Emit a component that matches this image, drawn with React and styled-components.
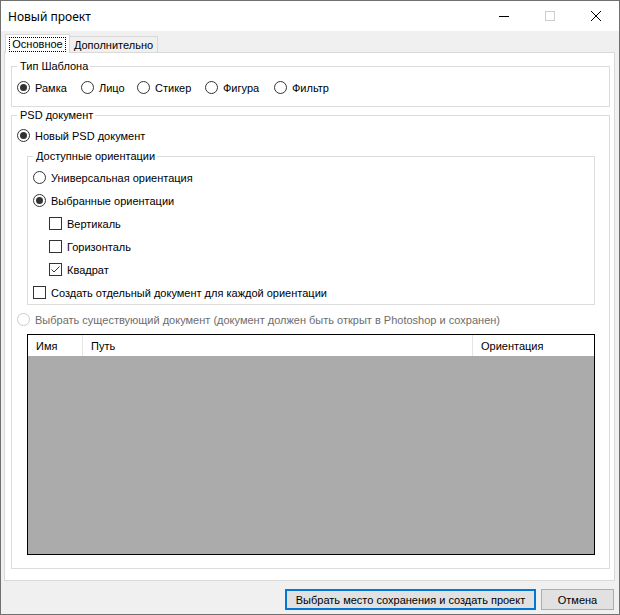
import React from "react";
import styled, { createGlobalStyle } from "styled-components";

const GlobalStyle = createGlobalStyle`
  html, body {
    margin: 0;
    padding: 0;
  }
  body {
    background: #f0f0f0;
    font-family: "Liberation Sans", Arial, sans-serif;
    font-size: 11px;
    color: #000;
  }
`;

const Window = styled.div`
  width: 620px;
  height: 615px;
  box-sizing: border-box;
  border: 1px solid #707070;
  background: #f0f0f0;
  display: flex;
  flex-direction: column;
`;

const TitleBar = styled.div`
  height: 30px;
  flex-shrink: 0;
  background: #fff;
  display: flex;
  align-items: center;
`;

const Title = styled.div`
  flex: 1;
  padding-left: 7px;
  font-family: "Noto Sans", "Open Sans", sans-serif;
  font-size: 12px;
`;

const CaptionButton = styled.div`
  width: 46px;
  height: 30px;
  display: flex;
  align-items: center;
  justify-content: center;
`;

const Body = styled.div`
  flex: 1;
  display: flex;
  flex-direction: column;
  padding: 3px 4px 4px 3px;
`;

const TabStrip = styled.div`
  height: 18px;
  display: flex;
  align-items: flex-end;
  padding-left: 1px;
`;

const Tab = styled.div`
  box-sizing: border-box;
  border: 1px solid #d9d9d9;
  border-bottom: none;
  position: relative;
  display: flex;
  align-items: center;
  justify-content: center;
  width: ${(p) => p.$w}px;
  height: ${(p) => (p.$active ? 19 : 16)}px;
  margin-bottom: ${(p) => (p.$active ? -1 : 0)}px;
  margin-left: ${(p) => (p.$active ? 0 : -1)}px;
  background: ${(p) => (p.$active ? "#fff" : "#f0f0f0")};
  z-index: ${(p) => (p.$active ? 2 : 1)};
`;

const FocusBox = styled.span`
  box-sizing: border-box;
  border: 1px dotted #000;
  height: 15px;
  line-height: 13px;
  padding: 0 2px;
  margin-top: 1px;
`;

const TabPage = styled.div`
  flex: 1;
  display: flex;
  flex-direction: column;
  background: #fff;
  border: 1px solid #d9d9d9;
  padding: 7px 4px 11px 6px;
`;

const Group = styled.fieldset`
  margin: ${(p) => p.$mt || 0}px ${(p) => p.$mx || 0}px 0;
  padding: ${(p) => p.$pt || 0}px 4px ${(p) => p.$pb || 0}px 5px;
  border: 1px solid #dcdcdc;
  min-width: 0;
  display: flex;
  flex-direction: column;
  flex: ${(p) => (p.$grow ? 1 : "none")};
`;

const Legend = styled.legend`
  padding: 0 2px 0 3px;
  line-height: 13px;
  font-size: 11px;
`;

const Row = styled.div`
  height: 23px;
  display: flex;
  align-items: center;
  gap: ${(p) => (p.$gap !== undefined ? p.$gap : 0)}px;
  padding-left: ${(p) => p.$indent || 0}px;
  margin-top: ${(p) => p.$mt || 0}px;
  flex-shrink: 0;
`;

const Option = styled.label`
  display: flex;
  align-items: center;
  gap: 5px;
  width: ${(p) => (p.$w ? `${p.$w}px` : "auto")};
  color: ${(p) => (p.$disabled ? "#6d6d6d" : "#000")};
  white-space: nowrap;
`;

const RadioCircle = styled.span`
  box-sizing: border-box;
  width: 13px;
  height: 13px;
  border-radius: 50%;
  border: 1px solid ${(p) => (p.$disabled ? "#cccccc" : "#333")};
  background: #fff;
  display: flex;
  align-items: center;
  justify-content: center;
  flex-shrink: 0;

  &::after {
    content: "";
    width: 7px;
    height: 7px;
    border-radius: 50%;
    background: #333;
    display: ${(p) => (p.$checked ? "block" : "none")};
  }
`;

const CheckSquare = styled.span`
  box-sizing: border-box;
  width: 13px;
  height: 13px;
  border: 1px solid #333;
  background: #fff;
  display: flex;
  align-items: center;
  justify-content: center;
  flex-shrink: 0;
`;

const ListView = styled.div`
  flex: 1;
  margin: 3px 10px 0;
  border: 1px solid #000;
  background: #ababab;
  display: flex;
  flex-direction: column;
`;

const Header = styled.div`
  height: 21px;
  background: #fff;
  display: grid;
  grid-template-columns: 55px 390px 1fr;
`;

const HeaderCell = styled.div`
  display: flex;
  align-items: center;
  padding-left: 8px;
  border-right: ${(p) => (p.$last ? "none" : "1px solid #e5e5e5")};
`;

const ButtonBar = styled.div`
  height: 21px;
  margin-top: 8px;
  display: flex;
  justify-content: flex-end;
  gap: 5px;
  padding-right: 1px;
`;

const Button = styled.button`
  box-sizing: border-box;
  height: 21px;
  width: ${(p) => p.$w}px;
  padding: 0;
  font-family: "Liberation Sans", Arial, sans-serif;
  font-size: 11px;
  color: #000;
  background: #e1e1e1;
  border: ${(p) => (p.$default ? "2px solid #0078d7" : "1px solid #adadad")};
  border-radius: 0;
`;

const Radio = ({ label, checked, disabled, w }) => (
  <Option $w={w} $disabled={disabled}>
    <RadioCircle $checked={checked} $disabled={disabled} />
    {label}
  </Option>
);

const Checkbox = ({ label, checked }) => (
  <Option>
    <CheckSquare>
      {checked && (
        <svg width="11" height="11" viewBox="0 0 11 11">
          <polyline points="1.5,5.5 4,8 9.5,2.5" fill="none" stroke="#333" strokeWidth="1" />
        </svg>
      )}
    </CheckSquare>
    {label}
  </Option>
);

export default function App() {
  return (
    <>
      <GlobalStyle />
      <Window>
        <TitleBar>
          <Title>Новый проект</Title>
          <CaptionButton>
            <svg width="10" height="10" viewBox="0 0 10 10">
              <line x1="0" y1="5.5" x2="10" y2="5.5" stroke="#000" strokeWidth="1" />
            </svg>
          </CaptionButton>
          <CaptionButton>
            <svg width="10" height="10" viewBox="0 0 10 10">
              <rect x="0.5" y="0.5" width="9" height="9" fill="none" stroke="#cccccc" strokeWidth="1" />
            </svg>
          </CaptionButton>
          <CaptionButton>
            <svg width="10" height="10" viewBox="0 0 10 10">
              <line x1="0" y1="0" x2="10" y2="10" stroke="#000" strokeWidth="1" />
              <line x1="10" y1="0" x2="0" y2="10" stroke="#000" strokeWidth="1" />
            </svg>
          </CaptionButton>
        </TitleBar>

        <Body>
          <TabStrip>
            <Tab $active $w={65}>
              <FocusBox>Основное</FocusBox>
            </Tab>
            <Tab $w={89}>Дополнительно</Tab>
          </TabStrip>

          <TabPage>
            <Group $pt={3} $pb={7}>
              <Legend>Тип Шаблона</Legend>
              <Row>
                <Radio label="Рамка" checked w={64} />
                <Radio label="Лицо" w={56} />
                <Radio label="Стикер" w={68} />
                <Radio label="Фигура" w={69} />
                <Radio label="Фильтр" />
              </Row>
            </Group>

            <Group $mt={2} $pt={2} $pb={13} $grow>
              <Legend>PSD документ</Legend>
              <Row>
                <Radio label="Новый PSD документ" checked />
              </Row>

              <Group $mt={3} $mx={10} $pt={3} $pb={0}>
                <Legend>Доступные ориентации</Legend>
                <Row>
                  <Radio label="Универсальная ориентация" />
                </Row>
                <Row>
                  <Radio label="Выбранные ориентации" checked />
                </Row>
                <Row $indent={16}>
                  <Checkbox label="Вертикаль" />
                </Row>
                <Row $indent={16}>
                  <Checkbox label="Горизонталь" />
                </Row>
                <Row $indent={16}>
                  <Checkbox label="Квадрат" checked />
                </Row>
                <Row>
                  <Checkbox label="Создать отдельный документ для каждой ориентации" />
                </Row>
              </Group>

              <Row $mt={3}>
                <Radio
                  label="Выбрать существующий документ (документ должен быть открыт в Photoshop и сохранен)"
                  disabled
                />
              </Row>

              <ListView>
                <Header>
                  <HeaderCell>Имя</HeaderCell>
                  <HeaderCell>Путь</HeaderCell>
                  <HeaderCell $last>Ориентация</HeaderCell>
                </Header>
              </ListView>
            </Group>
          </TabPage>

          <ButtonBar>
            <Button $default $w={251}>
              Выбрать место сохранения и создать проект
            </Button>
            <Button $w={73}>Отмена</Button>
          </ButtonBar>
        </Body>
      </Window>
    </>
  );
}
